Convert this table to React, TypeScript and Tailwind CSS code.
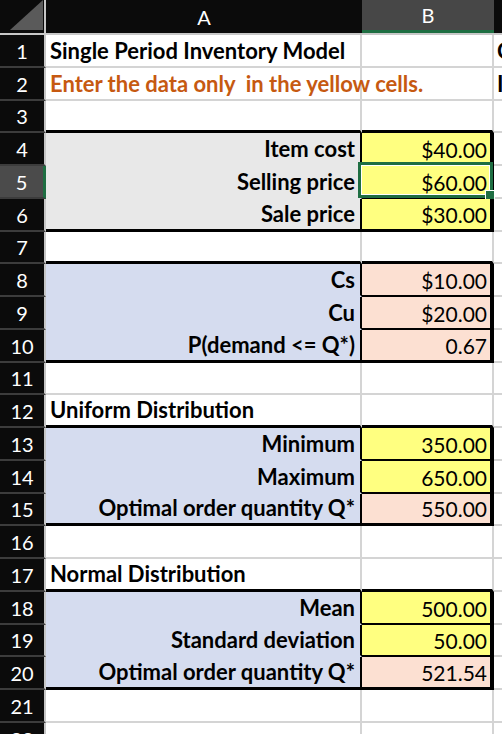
import React from 'react';

type Row = {
  n: number;
  a?: string;
  aKind?: 'title' | 'note' | 'label';
  b?: string;
  aBg?: 'gray' | 'blue';
  bBg?: 'yellow' | 'peach';
  inBlock?: boolean;
  thickBottom?: boolean;
  c?: string;
  selected?: boolean;
};

const rows: Row[] = [
  { n: 1, a: 'Single Period Inventory Model', aKind: 'title', c: 'C' },
  { n: 2, a: 'Enter the data only  in the yellow cells.', aKind: 'note', c: 'I' },
  { n: 3, thickBottom: true },
  { n: 4, a: 'Item cost', aKind: 'label', b: '$40.00', aBg: 'gray', bBg: 'yellow', inBlock: true },
  { n: 5, a: 'Selling price', aKind: 'label', b: '$60.00', aBg: 'gray', bBg: 'yellow', inBlock: true, selected: true },
  { n: 6, a: 'Sale price', aKind: 'label', b: '$30.00', aBg: 'gray', bBg: 'yellow', inBlock: true, thickBottom: true },
  { n: 7, thickBottom: true },
  { n: 8, a: 'Cs', aKind: 'label', b: '$10.00', aBg: 'blue', bBg: 'peach', inBlock: true },
  { n: 9, a: 'Cu', aKind: 'label', b: '$20.00', aBg: 'blue', bBg: 'peach', inBlock: true },
  { n: 10, a: 'P(demand <= Q*)', aKind: 'label', b: '0.67', aBg: 'blue', bBg: 'peach', inBlock: true, thickBottom: true },
  { n: 11 },
  { n: 12, a: 'Uniform Distribution', aKind: 'title', thickBottom: true },
  { n: 13, a: 'Minimum', aKind: 'label', b: '350.00', aBg: 'blue', bBg: 'yellow', inBlock: true },
  { n: 14, a: 'Maximum', aKind: 'label', b: '650.00', aBg: 'blue', bBg: 'yellow', inBlock: true },
  { n: 15, a: 'Optimal order quantity Q*', aKind: 'label', b: '550.00', aBg: 'blue', bBg: 'peach', inBlock: true, thickBottom: true },
  { n: 16 },
  { n: 17, a: 'Normal Distribution', aKind: 'title', thickBottom: true },
  { n: 18, a: 'Mean', aKind: 'label', b: '500.00', aBg: 'blue', bBg: 'yellow', inBlock: true },
  { n: 19, a: 'Standard deviation', aKind: 'label', b: '50.00', aBg: 'blue', bBg: 'yellow', inBlock: true },
  { n: 20, a: 'Optimal order quantity Q*', aKind: 'label', b: '521.54', aBg: 'blue', bBg: 'peach', inBlock: true, thickBottom: true },
  { n: 21 },
  { n: 22 },
];

function SheetRow({ r }: { r: Row }) {
  const aBg = r.aBg === 'gray' ? 'bg-[#e8e8e8]' : r.aBg === 'blue' ? 'bg-[#d5dcef]' : '';
  const bBg = r.bBg === 'yellow' ? 'bg-[#ffff80]' : r.bBg === 'peach' ? 'bg-[#fce0d2]' : '';

  const aBottom = r.thickBottom
    ? 'border-b-[3px] border-b-black'
    : r.inBlock
      ? 'border-b-2 border-b-transparent'
      : 'border-b-2 border-b-[#d4d4d4]';
  const bBottom = r.thickBottom
    ? 'border-b-[3px] border-b-black'
    : r.inBlock
      ? 'border-b-2 border-b-black'
      : 'border-b-2 border-b-[#d4d4d4]';
  const aRight = r.inBlock ? 'border-r-2 border-r-black' : 'border-r-2 border-r-[#d4d4d4]';
  const bRight = r.inBlock ? 'border-r-[4px] border-r-black' : 'border-r-2 border-r-[#d4d4d4]';

  const aAlign = r.aKind === 'label' ? 'justify-end pr-[5px]' : 'justify-start pl-[4px]';
  const aColor = r.aKind === 'note' ? 'text-[#c65911]' : 'text-black';

  return (
    <div className="flex h-[32.76px] shrink-0">
      <div
        className={
          'flex w-[46px] shrink-0 items-end justify-center border-b-2 border-b-[#3c3c3c] pb-[5px] text-[20px] leading-none text-white ' +
          (r.selected
            ? 'border-r-[3px] border-r-[#1e6e42] bg-[#4b4b4b]'
            : 'border-r-2 border-r-[#c6c6c6] bg-[#0b0b0b]')
        }
      >
        {r.n}
      </div>
      <div
        className={`flex w-[316px] shrink-0 items-end whitespace-pre pb-[4px] text-[22px] font-bold leading-none ${aBg} ${aBottom} ${aRight} ${aAlign} ${aColor}`}
      >
        {r.a}
      </div>
      <div
        className={`relative flex w-[132px] shrink-0 items-end justify-end pb-[4px] pr-[3px] text-[21px] leading-none text-black ${bBg} ${bBottom} ${bRight}`}
      >
        {r.b}
        {r.selected && (
          <div className="pointer-events-none absolute -bottom-[1px] -left-[4px] -right-[3px] -top-[4px] border-[3px] border-[#1e6e42] shadow-[inset_0_0_0_1px_#ffffff]">
            <div className="absolute -bottom-[5px] -right-[5px] h-[10px] w-[10px] border border-white bg-[#1e6e42]" />
          </div>
        )}
      </div>
      <div className="flex flex-1 items-end overflow-hidden border-b-2 border-b-[#d4d4d4] pb-[4px] pl-[3px] text-[22px] font-bold leading-none text-black">
        {r.c}
      </div>
    </div>
  );
}

export default function App() {
  return (
    <div className="flex h-[734px] w-[502px] flex-col overflow-hidden bg-white font-['Lato',sans-serif]">
      <div className="flex h-[35px] shrink-0 border-b-2 border-b-[#c8c8c8] bg-[#0b0b0b]">
        <div className="relative w-[46px] shrink-0 border-r-2 border-r-[#c6c6c6]">
          <svg className="absolute left-0 top-0" width="44" height="33" viewBox="0 0 44 33">
            <polygon points="10,30 43,30 43,0" fill="#5a5a5a" />
          </svg>
        </div>
        <div className="flex w-[316px] shrink-0 items-center justify-center text-[20px] text-white">A</div>
        <div className="flex w-[132px] shrink-0 items-center justify-center border-b-[3px] border-b-[#1e6e42] bg-[#474747] text-[20px] text-white">
          B
        </div>
        <div className="flex-1" />
      </div>
      {rows.map((r) => (
        <SheetRow key={r.n} r={r} />
      ))}
    </div>
  );
}
